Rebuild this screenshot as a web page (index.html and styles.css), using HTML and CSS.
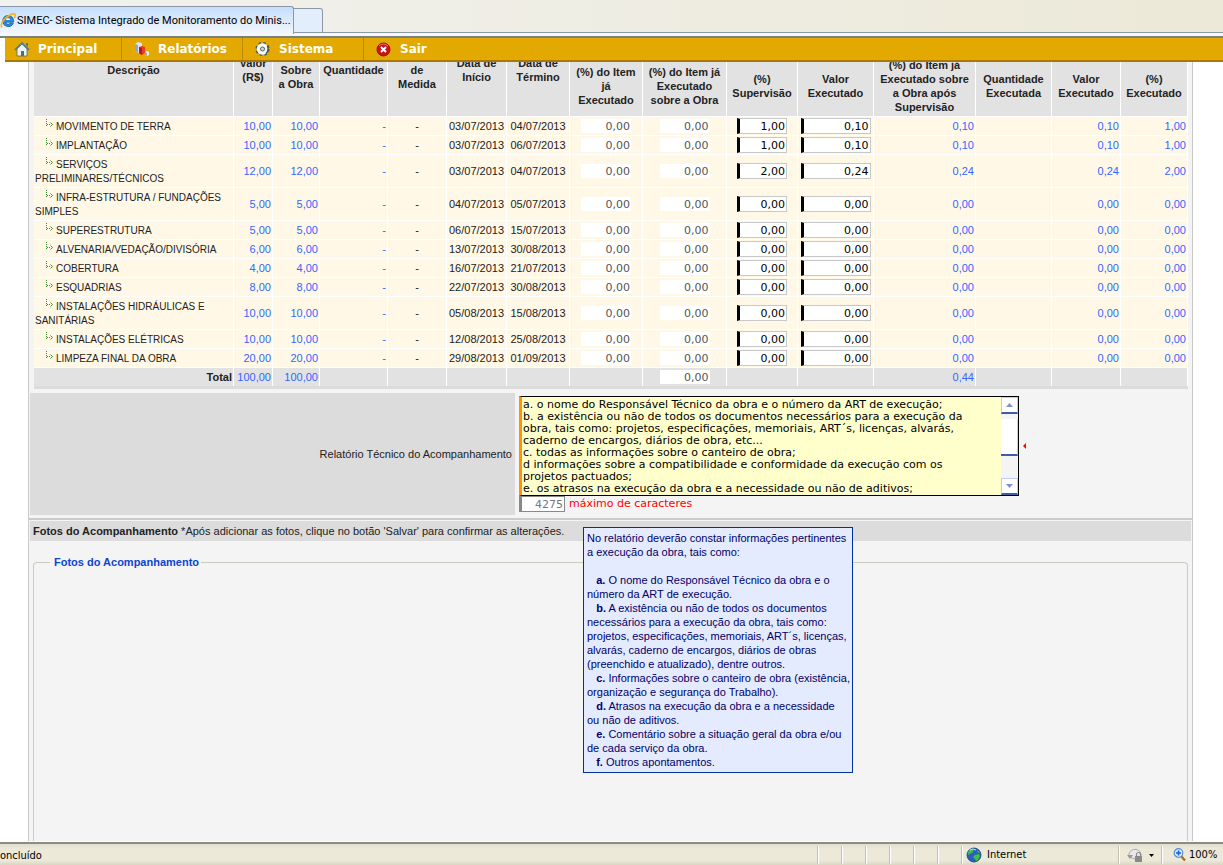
FILE: index.html
```
<!DOCTYPE html>
<html lang="pt-BR">
<head>
<meta charset="utf-8">
<title>SIMEC- Sistema Integrado de Monitoramento do Ministério</title>
<link rel="stylesheet" href="styles.css">
</head>
<body>
<header class="tabs">
  <button class="tab tab-active" type="button">
    <svg class="tab-icon" viewBox="0 0 16 16" width="16" height="16" aria-hidden="true">
      <path d="M8 2.500A5.500 5.500 0 1 0 13.300 10.200H10Q9.400 11.300 8 11.300Q5.900 11.200 5.800 9.200H13.600Q13.900 2.800 8 2.500Z" fill="#2b8be0" stroke="#175ca8" stroke-width=".8"/>
      <path d="M5.800 6.900Q6.200 5.100 8 5.100T10.200 6.900Z" fill="#e4f3ff"/>
      <path d="M2 14.500Q-.5 12 5 5.600Q12-.5 15 1.300Q15.800 2.500 14.300 5" fill="none" stroke="#f0b41c" stroke-width="1.600"/>
    </svg>
    <span>SIMEC- Sistema Integrado de Monitoramento do Minis...</span>
  </button>
  <button class="tab tab-new" type="button" aria-label="Nova guia"></button>
</header>
<nav class="menu">
  <a class="menu-item" href="#">
    <svg viewBox="0 0 16 16" width="16" height="16" aria-hidden="true"><path d="M3 8v7h10V8L8 3z" fill="#eef2f2" stroke="#506b70" stroke-width=".8"/><path d="M1 9l7-7 7 7" fill="none" stroke="#5b8088" stroke-width="1.800"/><path d="M12 2h2v4l-2-2z" fill="#55767c"/><path d="M7 10h3v5H7z" fill="#507078"/></svg>
    Principal</a>
  <a class="menu-item" href="#">
    <svg viewBox="0 0 16 16" width="16" height="16" aria-hidden="true"><path d="M1 3l3-2 4 1v9l-4 1-3-2z" fill="#dbe6f4"/><path d="M1 3l3 1v8l-3-2z" fill="#8ea8cc"/><path d="M5 6l3-1 3 1v6l-3 2-3-2z" fill="#e8392e"/><path d="M5 6l3 1v7l-3-2z" fill="#b01c18"/><path d="M11 11l2-1 2 1v3l-2 1-2-1z" fill="#f4ecd0"/><path d="M11 11l2 1v3l-2-1z" fill="#91a8c8"/></svg>
    Relatórios</a>
  <a class="menu-item" href="#">
    <svg viewBox="0 0 16 16" width="16" height="16" aria-hidden="true"><circle cx="7.500" cy="8" r="5.600" fill="none" stroke="#48606a" stroke-width="3" stroke-dasharray="2.400 2"/><circle cx="7.500" cy="8" r="4" fill="none" stroke="#f4f9fb" stroke-width="3.400"/><circle cx="7.500" cy="8" r="2" fill="#c9d6da" stroke="#54707c" stroke-width="1"/><path d="M11 12.500Q14 9.500 12.500 5" fill="none" stroke="#34505c" stroke-width="1.200"/></svg>
    Sistema</a>
  <a class="menu-item" href="#">
    <svg viewBox="0 0 16 16" width="16" height="16" aria-hidden="true"><circle cx="7.500" cy="8.500" r="6.500" fill="#c4151c" stroke="#9d0e12"/><path d="M3 5Q7.500 1 12 5" fill="none" stroke="#e77" stroke-width="1"/><path d="M5 6l5 5M10 6l-5 5" stroke="#fff" stroke-width="2"/></svg>
    Sair</a>
</nav>
<main class="viewport">
  <div class="panel">
    <div class="grid-wrap">
      <table class="items">
        <colgroup>
          <col class="w-desc"><col class="w-val"><col class="w-pct"><col class="w-qty"><col class="w-unit"><col class="w-start"><col class="w-end"><col class="w-done"><col class="w-donework"><col class="w-sup"><col class="w-exec"><col class="w-after"><col class="w-qtyex"><col class="w-valex"><col class="w-pctex">
        </colgroup>
        <thead>
          <tr class="group">
            <th rowspan="2">Descrição</th><th rowspan="2">Valor (R$)</th><th rowspan="2">(%)<br>Sobre<br>a Obra</th><th rowspan="2">Quantidade</th><th rowspan="2">Unidade<br>de<br>Medida</th><th rowspan="2">Data de Início</th><th rowspan="2">Data de Término</th><th colspan="2"></th><th colspan="3"></th><th colspan="3"></th>
          </tr>
          <tr>
            <th>(%) do Item<br>já<br>Executado</th><th>(%) do Item já Executado sobre a Obra</th><th>(%)<br>Supervisão</th><th>Valor Executado</th><th>(%) do Item já<br>Executado sobre<br>a Obra após<br>Supervisão</th><th>Quantidade Executada</th><th>Valor Executado</th><th>(%)<br>Executado</th>
          </tr>
        </thead>
        <tbody id="rows"></tbody>
        <tfoot>
          <tr><td class="total">Total</td><td class="num">100,00</td><td class="num">100,00</td><td></td><td></td><td></td><td></td><td></td><td class="mid"><input class="ro" value="0,00" readonly aria-label="Total executado sobre a obra"></td><td></td><td></td><td class="num">0,44</td><td></td><td></td><td></td></tr>
        </tfoot>
      </table>
    </div>
    <div class="report">
      <label class="report-label" for="report">Relatório Técnico do Acompanhamento</label>
      <div class="report-field">
        <div class="area-line">
          <div class="area">
            <textarea id="report" spellcheck="false">a. o nome do Responsável Técnico da obra e o número da ART de execução;
b. a existência ou não de todos os documentos necessários para a execução da
obra, tais como: projetos, especificações, memoriais, ART´s, licenças, alvarás,
caderno de encargos, diários de obra, etc...
c. todas as informações sobre o canteiro de obra;
d informações sobre a compatibilidade e conformidade da execução com os
projetos pactuados;
e. os atrasos na execução da obra e a necessidade ou não de aditivos;</textarea>
            <div class="scroll">
              <button class="sb" type="button" aria-label="Rolar para cima"><svg viewBox="0 0 7 4" width="7" height="4"><path d="M0 4L3.500 0 7 4z" fill="#8890c8"/></svg></button>
              <span class="thumb"></span>
              <button class="sb sb-down" type="button" aria-label="Rolar para baixo"><svg viewBox="0 0 7 4" width="7" height="4"><path d="M0 0h7L3.500 4z" fill="#8890c8"/></svg></button>
            </div>
          </div>
          <svg viewBox="0 0 3 6" width="3" height="6" aria-hidden="true"><path d="M3 0v6L0 3z" fill="#f00"/></svg>
        </div>
        <div class="counter"><input id="left" value="4275" readonly><label for="left">máximo de caracteres</label></div>
      </div>
    </div>
    <div class="photos-bar"><b>Fotos do Acompanhamento</b> *Após adicionar as fotos, clique no botão 'Salvar' para confirmar as alterações.</div>
    <fieldset class="photos"><legend>Fotos do Acompanhamento</legend></fieldset>
  </div>
  <div class="tip" role="tooltip">
    <p>No relatório deverão constar informações pertinentes a execução da obra, tais como:</p>
    <ul>
      <li><b>a.</b> O nome do Responsável Técnico da obra e o número da ART de execução.</li>
      <li><b>b.</b> A existência ou não de todos os documentos necessários para a execução da obra, tais como: projetos, especificações, memoriais, ART´s, licenças, alvarás, caderno de encargos, diários de obras (preenchido e atualizado), dentre outros.</li>
      <li><b>c.</b> Informações sobre o canteiro de obra (existência, organização e segurança do Trabalho).</li>
      <li><b>d.</b> Atrasos na execução da obra e a necessidade<br>ou não de aditivos.</li>
      <li><b>e.</b> Comentário sobre a situação geral da obra e/ou de cada serviço da obra.</li>
      <li><b>f.</b> Outros apontamentos.</li>
    </ul>
  </div>
</main>
<footer class="status">
  <span class="status-text">oncluído</span>
  <span class="slot"></span><span class="slot"></span><span class="slot"></span><span class="slot"></span><span class="slot"></span><span class="slot"></span>
  <span class="slot zone">
    <svg viewBox="0 0 16 16" width="16" height="16" aria-hidden="true"><circle cx="8" cy="8" r="7" fill="#2a5fc0" stroke="#1c3c80" stroke-width=".8"/><path d="M3 3q3-2 5-1l-1 3-3 2-2 1q0-3 1-5zM9 8l4-1 1 2-2 4-2 1-1-2-2-2zM11 3l3 2-2 1z" fill="#3fc23c"/><path d="M4 3q3-2 6 0" stroke="#b8dcff" fill="none"/></svg>
    Internet</span>
  <span class="slot lock">
    <svg viewBox="0 0 16 16" width="16" height="16" aria-hidden="true"><path d="M2 10A6 6 0 0 1 14 7v5H8z" fill="#e8e8e8" stroke="#aaa"/><path d="M0 8h6l-3 4z" fill="#999"/><path d="M8 9h7v6H8z" fill="#8a8a8a"/><path d="M9.500 9V7.500a2 2 0 0 1 4 0V9" fill="none" stroke="#8a8a8a" stroke-width="1.200"/></svg>
    <svg viewBox="0 0 5 3" width="5" height="3" aria-hidden="true"><path d="M0 0h5L2.500 3z"/></svg>
  </span>
  <button class="slot zoom" type="button">
    <svg viewBox="0 0 14 14" width="14" height="14" aria-hidden="true"><path d="M8 8l4 4.500" stroke="#b06a28" stroke-width="2.400"/><circle cx="5.500" cy="5" r="4.300" fill="#d8ecff" stroke="#5a8fd8" stroke-width="1.200"/><path d="M5.500 2.500v5M3 5h5" stroke="#1560d0" stroke-width="1.600"/></svg>
    100%</button>
</footer>
<script src="app.js"></script>
</body>
</html>
```
FILE: app.js
```
// description, share of value, start, end, supervision %, executed value
const items = [
  ["MOVIMENTO DE TERRA", "10,00", "03/07/2013", "04/07/2013", "1,00", "0,10"],
  ["IMPLANTAÇÃO", "10,00", "03/07/2013", "06/07/2013", "1,00", "0,10"],
  ["SERVIÇOS PRELIMINARES/TÉCNICOS", "12,00", "03/07/2013", "04/07/2013", "2,00", "0,24"],
  ["INFRA-ESTRUTURA / FUNDAÇÕES SIMPLES", "5,00", "04/07/2013", "05/07/2013", "0,00", "0,00"],
  ["SUPERESTRUTURA", "5,00", "06/07/2013", "15/07/2013", "0,00", "0,00"],
  ["ALVENARIA/VEDAÇÃO/DIVISÓRIA", "6,00", "13/07/2013", "30/08/2013", "0,00", "0,00"],
  ["COBERTURA", "4,00", "16/07/2013", "21/07/2013", "0,00", "0,00"],
  ["ESQUADRIAS", "8,00", "22/07/2013", "30/08/2013", "0,00", "0,00"],
  ["INSTALAÇÕES HIDRÁULICAS E SANITÁRIAS", "10,00", "05/08/2013", "15/08/2013", "0,00", "0,00"],
  ["INSTALAÇÕES ELÉTRICAS", "10,00", "12/08/2013", "25/08/2013", "0,00", "0,00"],
  ["LIMPEZA FINAL DA OBRA", "20,00", "29/08/2013", "01/09/2013", "0,00", "0,00"]
];

const arrow = '<svg class="branch" viewBox="0 0 7 8" width="7" height="8" aria-hidden="true"><path d="M.5 0v7M1 5.500h4" fill="none" stroke="#3d8a2c" stroke-dasharray="1 1"/><path d="M4.500 3.500l2 2-2 2" fill="none" stroke="#3d8a2c"/></svg>';
const num = (v) => `<td class="num">${v}</td>`;
const box = (cls, v, label) => `<td class="mid"><input class="${cls}" value="${v}" ${cls === "ro" ? "readonly" : ""} aria-label="${label}"></td>`;

document.getElementById("rows").innerHTML = items.map(([name, share, start, end, pct, val]) => `
  <tr>
    <td class="desc">${arrow}${name}</td>
    ${num(share)}${num(share)}${num("-")}
    <td class="mid">-</td><td class="mid">${start}</td><td class="mid">${end}</td>
    ${box("ro", "0,00", "Executado do item")}${box("ro", "0,00", "Executado sobre a obra")}
    ${box("ed", pct, "Supervisão")}${box("ed wide", val, "Valor executado")}
    ${num(val)}${num("")}${num(val)}${num(pct)}
  </tr>`).join("");
```
FILE: styles.css
```
* { box-sizing: border-box; }
body {
  margin: 0;
  height: 100vh;
  display: flex;
  flex-direction: column;
  overflow: hidden;
  background: #fff;
  color: #222;
  font: 11px/14px "Liberation Sans", Arial, sans-serif;
}
button, input, textarea { font: inherit; color: inherit; margin: 0; padding: 0; border: 0; border-radius: 0; }
button { background: none; }
svg { flex: none; display: block; }

/* browser tabs */
.tabs {
  flex: none;
  height: 38px;
  padding-top: 6px;
  display: flex;
  align-items: flex-start;
  background: linear-gradient(#8c97a8, #8c97a8) 0 32px / 100% 1px no-repeat, linear-gradient(90deg, #f1f1ee, #ece9d8) top / 100% 32px no-repeat, #f4f7fc;
  border-bottom: 2px solid #7c8078;
  font: 11px/14px Roboto, Tahoma, sans-serif;
}
.tab { border: 1px solid #8c97a8; display: flex; align-items: center; white-space: nowrap; }
.tab-active {
  height: 28px;
  width: 294px;
  border-left: 0;
  border-bottom: 0;
  border-top-right-radius: 3px;
  background: linear-gradient(#c4defc, #f4f7fc);
  color: #000;
}
.tab-icon { margin-right: 1px; }
.tab-new { height: 25px; margin-top: 2px; width: 29px; border-left: 0; border-radius: 0 3px 0 0; background: #e2eefc; }

/* application menu */
.menu {
  flex: none;
  height: 24px;
  margin-left: 5px;
  display: flex;
  background: #e3a900;
  border-bottom: 2px solid #a87800;
}
.menu-item {
  width: 121px;
  padding-left: 12px;
  display: flex;
  align-items: center;
  gap: 8px;
  border-right: 1px solid #b88900;
  color: #fff;
  text-decoration: none;
  font: bold 12px/16px "DejaVu Sans", Verdana, sans-serif;
}
.menu-item:first-child { width: 117px; padding-left: 9px; }
.menu-item:last-child { border-right: 0; }

/* page */
.viewport { flex: 1; min-height: 0; position: relative; overflow: hidden; display: flex; }
.panel {
  flex: 1;
  min-width: 0;
  margin: -38px 30px 0 28px;
  display: flex;
  flex-direction: column;
  background: #f4f4f4;
  border: solid #c9c9c9;
  border-width: 0 1px;
}
.grid-wrap { margin: 0 4px 0 5px; border-bottom: 3px solid #dcdcdc; }

.items { width: 100%; table-layout: fixed; border-collapse: separate; border-spacing: 0; }
.w-desc { width: 200px; } .w-val { width: 39px; } .w-pct { width: 47px; } .w-qty { width: 68px; }
.w-unit { width: 59px; } .w-start { width: 60px; } .w-end { width: 63px; } .w-done { width: 73px; }
.w-donework { width: 84px; } .w-sup { width: 71px; } .w-exec { width: 76px; } .w-after { width: 102px; }
.w-qtyex { width: 76px; } .w-valex { width: 69px; } .w-pctex { width: 67px; }
.items th, .items td { padding: 2px 1px; border-right: 1px solid #fff; border-bottom: 1px solid #fff; vertical-align: middle; }
.items th { background: #e2e2e2; font-weight: bold; text-align: center; }
.group { height: 32px; }
.items td { background: #fff8e7; }
.items tfoot td { background: #e2e2e2; border-bottom: 0; }
.items .mid { text-align: center; padding: 1px; white-space: nowrap; }
.items .num { text-align: right; padding-right: 1px; color: #36f; }
.items .desc { font-size: 10px; padding: 3px 1px 1px; }
.items .total { text-align: right; font-weight: bold; }
.branch { display: inline-block; margin: -2px 3px 0 11px; vertical-align: 3px; }
.items input { display: block; margin: 0 auto; width: 50px; text-align: right; font: 11px/14px "DejaVu Sans", Verdana, sans-serif; }
.items .ro { height: 14px; background: #fff; color: #555; padding: 1px 1px 0 0; }
.items .ed { height: 16px; background: #fff; color: #000; border: 1px solid #c8c8c8; border-left: 3px solid #000; padding-right: 1px; }
.items .wide { width: 70px; }

/* technical report */
.report { display: flex; padding: 4px 0 3px 1px; border-bottom: 2px solid #cbcbcb; }
.report-label { width: 485px; display: flex; align-items: center; justify-content: flex-end; padding-right: 3px; background: #dcdcdc; }
.report-field { flex: 1; padding: 3px 0 3px 4px; font: 11px/12px "DejaVu Sans", Verdana, sans-serif; }
.area-line { display: flex; align-items: center; gap: 4px; }
.area { width: 500px; height: 100px; display: flex; border: 1px solid #000; border-left: 3px solid #ff9500; background: #ffc; }
.area textarea { flex: 1; min-width: 0; padding: 2px 0 0 1px; resize: none; overflow: hidden; outline: 0; background: #ffc; color: #000; white-space: pre; }
.scroll { width: 17px; display: flex; flex-direction: column; background: #f4f4f4; }
.sb { height: 17px; display: flex; align-items: center; justify-content: center; background: #fff; border: 1px solid #c4ccf4; border-bottom: 2px solid #3a5fa8; }
.sb-down { margin-top: auto; }
.thumb { height: 37px; margin-top: 5px; background: #fff; border-right: 1px solid #c4ccf4; border-bottom: 2px solid #3a5fa8; }
.counter { display: flex; align-items: center; gap: 4px; color: #f00; }
.counter input { width: 46px; height: 16px; border: 1px solid #888; border-left-width: 3px; background: #fff; color: #777; text-align: right; padding-right: 1px; }

/* photos */
.photos-bar { margin: 1px 1px 0; padding: 3px; background: #dcdcdc; }
.photos { flex: 1; margin: 14px 4px 0; padding: 0; border: 1px solid #ccccbc; border-bottom: 0; border-radius: 4px 4px 0 0; }
.photos legend { margin-left: 16px; padding-left: 4px; font-weight: bold; color: #0a46d2; }

.tip {
  position: absolute;
  left: 583px;
  top: 465px;
  width: 270px;
  padding: 3px 0 3px 3px;
  background: #e5ebff;
  border: 1px solid #039;
  color: #006;
}
.tip p { margin: 0 0 14px; }
.tip ul { margin: 0; padding: 0; list-style: none; }
.tip li::before { content: "\a0\a0\a0"; }

/* browser status bar */
.status {
  flex: none;
  height: 24px;
  display: flex;
  border-top: 1px solid #fff;
  box-shadow: inset 0 2px #8e8c80;
  background: linear-gradient(#dcd9c8, #ece9d8 30%, #ece9d8 80%, #dad6c4);
  color: #000;
  font: 11px/14px "DejaVu Sans Condensed", Tahoma, sans-serif;
  padding-top: 4px;
}
.status-text { flex: 1; align-self: center; }
.slot { width: 24px; margin-bottom: 1px; border-left: 1px solid #c4c1b0; box-shadow: inset 1px 0 #fff; display: flex; align-items: center; gap: 5px; }
.zone { width: 157px; padding-left: 4px; }
.lock { width: 43px; padding-left: 8px; gap: 6px; }
.zoom { width: 62px; padding-left: 11px; gap: 2px; }
```
